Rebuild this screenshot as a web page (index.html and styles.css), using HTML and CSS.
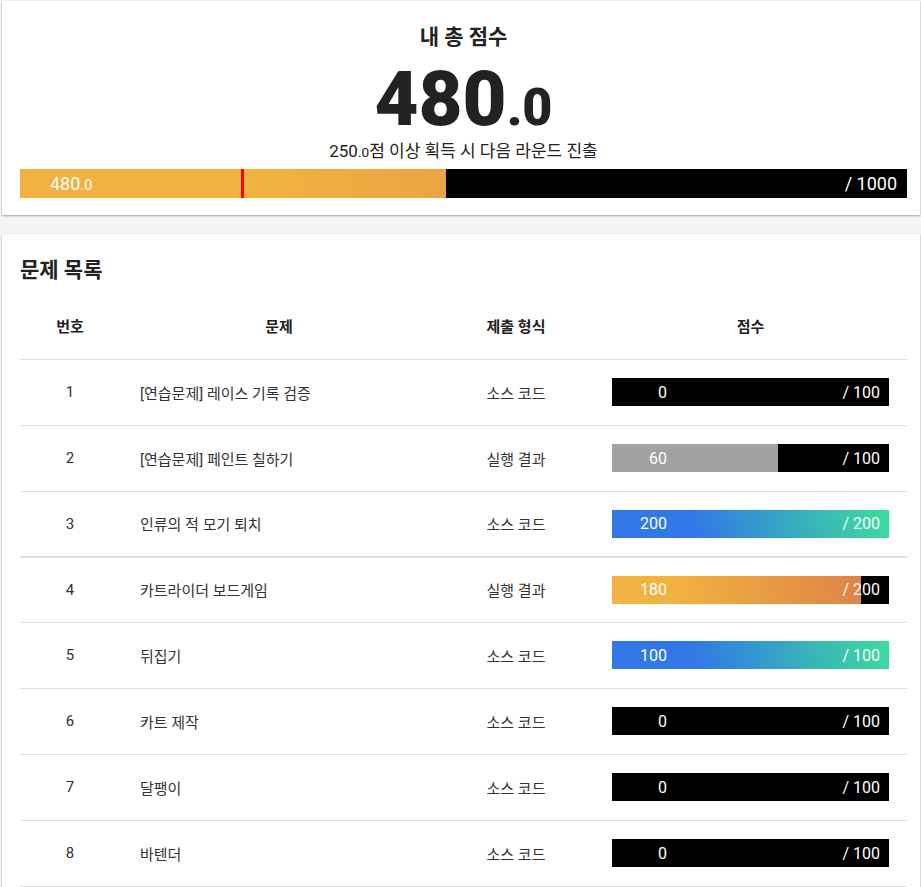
FILE: index.html
```html
<!DOCTYPE html>
<html lang="ko">
<head>
<meta charset="utf-8">
<title>내 총 점수</title>
<link rel="stylesheet" href="styles.css">
</head>
<body>
<section class="card summary">
  <h1 class="summary-title">내 총 점수</h1>
  <div class="total">480<span class="dec">.0</span></div>
  <p class="cutline">250<span class="dec-s">.0</span>점 이상 획득 시 다음 라운드 진출</p>
  <div class="bar bar-big">
    <div class="fill fill-orange-big" style="width:48%"></div>
    <div class="marker" style="left:25%"></div>
    <div class="bar-labels big-labels">
      <span class="big-value">480<span class="dec-s">.0</span></span>
      <span class="max">/ 1000</span>
    </div>
  </div>
</section>

<section class="card problems">
  <h2 class="problems-title">문제 목록</h2>
  <table class="ptable">
    <colgroup>
      <col class="c-no"><col class="c-name"><col class="c-type"><col class="c-score">
    </colgroup>
    <thead>
      <tr><th>번호</th><th>문제</th><th>제출 형식</th><th>점수</th></tr>
    </thead>
    <tbody>
      <tr>
        <td class="no">1</td><td class="name">[연습문제] 레이스 기록 검증</td><td class="type">소스 코드</td>
        <td class="score"><div class="bar"><div class="bar-labels"><span class="val">0</span><span class="max">/ 100</span></div></div></td>
      </tr>
      <tr>
        <td class="no">2</td><td class="name">[연습문제] 페인트 칠하기</td><td class="type">실행 결과</td>
        <td class="score"><div class="bar"><div class="fill fill-gray" style="width:60%"></div><div class="bar-labels"><span class="val">60</span><span class="max">/ 100</span></div></div></td>
      </tr>
      <tr class="sep">
        <td class="no">3</td><td class="name">인류의 적 모기 퇴치</td><td class="type">소스 코드</td>
        <td class="score"><div class="bar"><div class="fill fill-blue" style="width:100%"></div><div class="bar-labels"><span class="val">200</span><span class="max">/ 200</span></div></div></td>
      </tr>
      <tr>
        <td class="no">4</td><td class="name">카트라이더 보드게임</td><td class="type">실행 결과</td>
        <td class="score"><div class="bar"><div class="fill fill-orange" style="width:90%"></div><div class="bar-labels"><span class="val">180</span><span class="max">/ 200</span></div></div></td>
      </tr>
      <tr>
        <td class="no">5</td><td class="name">뒤집기</td><td class="type">소스 코드</td>
        <td class="score"><div class="bar"><div class="fill fill-blue" style="width:100%"></div><div class="bar-labels"><span class="val">100</span><span class="max">/ 100</span></div></div></td>
      </tr>
      <tr>
        <td class="no">6</td><td class="name">카트 제작</td><td class="type">소스 코드</td>
        <td class="score"><div class="bar"><div class="bar-labels"><span class="val">0</span><span class="max">/ 100</span></div></div></td>
      </tr>
      <tr>
        <td class="no">7</td><td class="name">달팽이</td><td class="type">소스 코드</td>
        <td class="score"><div class="bar"><div class="bar-labels"><span class="val">0</span><span class="max">/ 100</span></div></div></td>
      </tr>
      <tr>
        <td class="no">8</td><td class="name">바텐더</td><td class="type">소스 코드</td>
        <td class="score"><div class="bar"><div class="bar-labels"><span class="val">0</span><span class="max">/ 100</span></div></div></td>
      </tr>
    </tbody>
  </table>
</section>
</body>
</html>
```

FILE: styles.css
```css
* { box-sizing: border-box; }
html, body { margin: 0; padding: 0; }
body {
  background: #f5f5f5;
  padding: 1px 1px 0 2px;
  font-family: Roboto, "Noto Sans CJK KR", "Noto Sans", sans-serif;
  color: #222;
}
.card {
  background: #fff;
  box-shadow: 0 1px 2px rgba(0,0,0,0.35);
}
.summary {
  display: flex;
  flex-direction: column;
  align-items: center;
  padding: 22px 13px 17px 18px;
}
.summary-title {
  margin: 0;
  font-size: 21px;
  line-height: 28px;
  font-weight: 700;
  color: #222;
}
.total {
  margin-top: 11px;
  font-size: 76px;
  line-height: 74px;
  font-weight: 900;
  color: #222;
}
.total .dec { font-size: 52px; line-height: 1; }
.cutline {
  margin: 3px 0 0;
  font-size: 17px;
  line-height: 24px;
  color: #222;
}
.dec-s { font-size: 0.8em; line-height: 1; }
.bar {
  position: relative;
  background: #000;
  height: 28px;
  width: 100%;
  overflow: hidden;
}
.bar-big { margin-top: 6px; height: 29px; }
.fill {
  position: absolute;
  left: 0; top: 0; bottom: 0;
}
.fill-orange-big { background: linear-gradient(80deg, #f1b23f 55%, #eba443 100%); }
.fill-orange { background: linear-gradient(80deg, #f1b23f 25%, #dd8447 100%); }
.fill-gray { background: #a2a2a2; }
.fill-blue { background: linear-gradient(75deg, #3178e6 30%, #3ddd9b 100%); }
.marker {
  position: absolute;
  top: 0; bottom: 0;
  width: 3px;
  margin-left: -1px;
  background: #ff0000;
}
.bar-labels {
  position: relative;
  height: 100%;
  display: flex;
  align-items: center;
  justify-content: space-between;
  color: #fff;
  font-size: 16px;
  padding-right: 9px;
}
.big-labels { font-size: 18px; padding-left: 30px; padding-right: 10px; }
.val { width: 55px; text-align: right; }
.problems {
  margin-top: 19px;
  padding: 22px 13px 0 18px;
}
.problems-title {
  margin: 0 0 9px;
  font-size: 21px;
  line-height: 28px;
  font-weight: 700;
  color: #222;
}
.ptable {
  width: 100%;
  border-collapse: collapse;
  table-layout: fixed;
  font-size: 15px;
}
.c-no { width: 100px; }
.c-name { width: 318px; }
.c-type { width: 156px; }
.c-score { width: 313px; }
.ptable th {
  height: 66px;
  font-weight: 700;
  color: #222;
  text-align: center;
  border-bottom: 1px solid #e0e0e0;
}
.ptable td {
  height: 66px;
  color: #333;
  border-bottom: 1px solid #e0e0e0;
  vertical-align: middle;
}
.ptable tr.sep td { border-bottom-width: 2px; }
.ptable tr.sep + tr td { height: 65px; }
.no { text-align: center; }
.name { padding-left: 20px; }
.type { text-align: center; }
.score { padding: 0 18px; }
```
